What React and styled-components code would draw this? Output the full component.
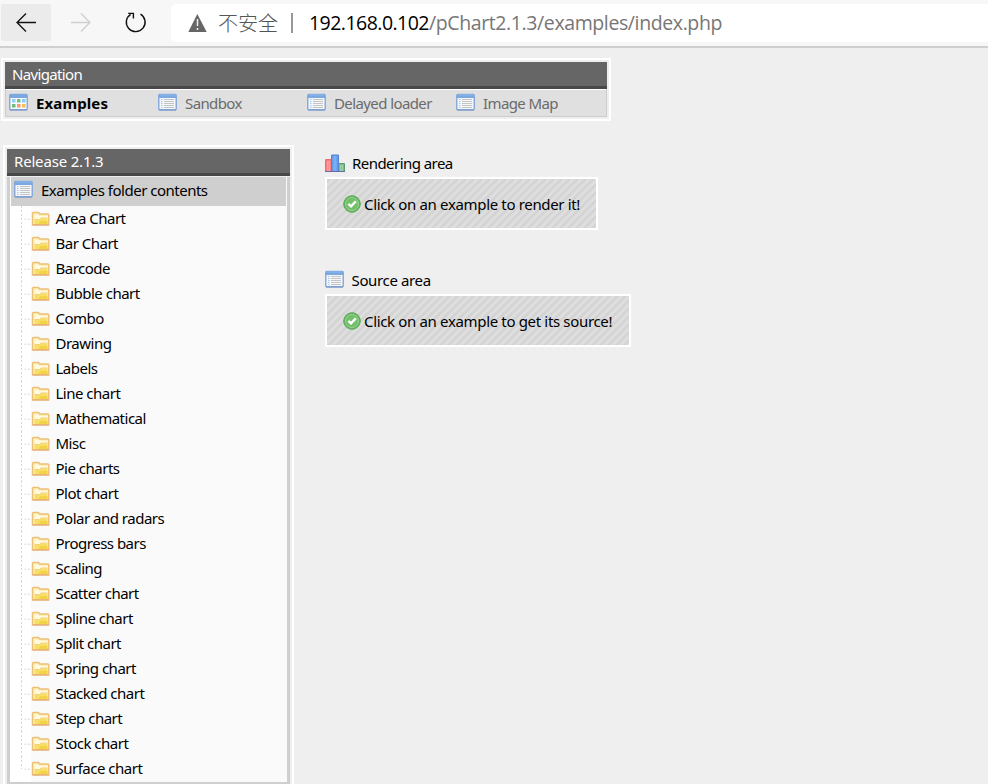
import React from "react";
import styled, { createGlobalStyle } from "styled-components";

const Global = createGlobalStyle`
  * { box-sizing: border-box; }
  html, body { margin: 0; padding: 0; height: 784px; overflow: hidden; background: #efefef; }
  body { font: 15px/20px Tahoma, "Noto Sans", sans-serif; letter-spacing: -0.5px; color: #000; white-space: nowrap; }
  svg { display: block; flex: none; }
`;

const Page = styled.div`
  width: 988px;
  height: 784px;
  overflow: hidden;
  background: #efefef;
`;
const Toolbar = styled.header`
  display: flex;
  height: 48px;
  padding: 4px 0 0 1px;
  background: #f7f7f7;
  border-bottom: 2px solid #cfcfcf;
`;
const ToolButton = styled.div`
  width: ${(p) => p.$w}px;
  height: 37px;
  background: ${(p) => (p.$active ? "#ebebeb" : "transparent")};
  border-radius: 2px;
`;
const Address = styled.div`
  display: flex;
  align-items: center;
  flex: 1;
  height: 38px;
  padding-left: 17px;
  background: #fff;
  border-radius: 5px 0 0 5px;
  font: 19.5px/38px "Segoe UI", "Open Sans", "Noto Sans", sans-serif;
  letter-spacing: ${(p) => p.$spacing}px;
  color: #767676;
`;
const Insecure = styled.span`
  width: 60px;
  margin-left: 11px;
  font: 300 20px/38px "Noto Sans CJK SC", sans-serif;
  letter-spacing: 0;
  color: #555;
`;
const Divider = styled.span`
  width: 2px;
  height: 20px;
  margin: 0 16px 0 13px;
  background: #999;
`;
const Host = styled.span`
  color: #000;
  letter-spacing: -0.53px;
`;
const Frame = styled.section`
  width: ${(p) => p.$w}px;
  height: ${(p) => p.$h}px;
  border: 2px solid #fff;
  padding: 2px;
  flex: none;
`;
const NavFrame = styled(Frame)`
  margin: 10px 0 0 1px;
`;
const Title = styled.div`
  height: 27px;
  padding: 2px 7px 0;
  border-bottom: 3px solid #484848;
  background: #666;
  color: #fff;
  letter-spacing: ${(p) => p.$spacing}px;
`;
const NavBar = styled.nav`
  display: grid;
  grid-template-columns: repeat(4, 149px);
  height: 28px;
  padding: 4px 0 0 3px;
  border: solid #ccc;
  border-width: 0 1px 1px;
  background: #e0e0e0;
  box-shadow: inset 0 1px #fff;
`;
const NavItem = styled.div`
  display: flex;
  height: 20px;
  color: ${(p) => (p.$active ? "#000" : "#6b6b6b")};
  font-weight: ${(p) => (p.$active ? 700 : 400)};
  letter-spacing: ${(p) => (p.$active ? 0.12 : -0.6)}px;
  gap: 8px;
`;
const Content = styled.main`
  display: flex;
  gap: 31px;
  margin: 24px 0 0 3px;
`;
const Tree = styled.div`
  height: 608px;
  border: solid #cfcfcf;
  border-width: 0 3px 3px;
  margin-top: 1px;
  background: linear-gradient(90deg, #fff 21px, #fafafa 21px);
`;
const TreeHead = styled.div`
  display: flex;
  gap: 8px;
  height: 29px;
  margin: 0 1px;
  padding: 3px 0 0 3px;
  background: #cfcfcf;
`;
const TreeRow = styled.div`
  display: flex;
  height: 25px;
  padding-left: 11px;
  line-height: 25px;
`;
const RowLabel = styled.span`
  margin-left: 5.5px;
`;
const Areas = styled.div`
  padding-top: 8px;
`;
const AreaHead = styled.div`
  display: flex;
  gap: ${(p) => p.$gap}px;
  height: 24px;
  line-height: 21px;
  letter-spacing: ${(p) => p.$spacing}px;
`;
const Message = styled.div`
  display: flex;
  align-items: center;
  gap: 3px;
  width: ${(p) => p.$w}px;
  height: 53px;
  margin-bottom: 40px;
  padding: 0 0 0 16px;
  border: 2px solid #fff;
  letter-spacing: -0.34px;
  background: repeating-linear-gradient(135deg, #d4d4d4 0 2.83px, #dedede 2.83px 5.66px);
`;

const ListIcon = () => (
  <svg width="19" height="19" viewBox="0 0 19 19">
    <rect x=".75" y="1.5" width="17.5" height="15.2" rx="1" fill="#f4f7fb" stroke="#8aabd9" strokeWidth="1.5" />
    <path d="M1 1h17v4H1z" fill="#7ba8df" />
    <path d="M2 2h15" stroke="#8db8ec" />
    <path d="M6 6.5h10M6 8.5h10M6 10.5h10M6 12.5h10M6 14.5h10" stroke="#c4c4c4" />
    <path d="M3 6.5h1.5M3 8.5h1.5M3 10.5h1.5M3 12.5h1.5M3 14.5h1.5" stroke="#9dc8f2" />
    <path d="M1 17h17" stroke="#7794c7" />
  </svg>
);
const GridIcon = () => (
  <svg width="19" height="19" viewBox="0 0 19 19">
    <rect x=".75" y="1.5" width="17.5" height="15.2" rx="1" fill="#f8fafb" stroke="#8aabd9" strokeWidth="1.5" />
    <path d="M1 1h17v4H1z" fill="#7ba8df" />
    <path d="M3 6h3.5v3.5H3z" fill="#8fd0f3" />
    <path d="M8 6h3.5v3.5H8z" fill="#74c187" />
    <path d="M13 6h3.5v3.5H13z" fill="#8ccaf8" />
    <path d="M3 11h3.5v3.5H3z" fill="#70bb76" />
    <path d="M8 11h3.5v3.5H8z" fill="#f69b6a" />
    <path d="M13 11h3.5v3.5H13z" fill="#f4bd62" />
    <path d="M1 17h17" stroke="#7794c7" />
  </svg>
);
const FolderIcon = ({ last }) => (
  <svg width="29" height="25" viewBox="0 0 29 25">
    <path d={last ? "M.5 0v13" : "M.5 0v25"} stroke="#d8d8d8" strokeDasharray="2 2" />
    <path d="M3.5 13.2h6" stroke="#d8d8d8" strokeDasharray="2 1.5" />
    <g transform="translate(10.5 5.5)">
      <path d="M1 13.3V2Q1 1 2 1h5l1.3 1.5h8q1 0 1 1V13.3z" fill="#fdf0b9" stroke="#ecbf74" strokeWidth="1.4" />
      <path d="M3 3h3.5l1.2 1.5H16v2H9.5L8 8H3z" fill="#fffae0" />
      <path d="M3 8.5h5L9.5 7H16v5.5H3z" fill="#f7df67" />
      <path d="M9 9.5h7v3H7z" fill="#f2d346" />
      <path d="M3 8h5l1.5-1.5H16" fill="none" stroke="#f3cf80" />
      <path d="M1 13.5h16.5" stroke="#e8ad78" strokeWidth="1.2" />
    </g>
  </svg>
);
const ChartIcon = () => (
  <svg width="20" height="19" viewBox="0 -1 20 19">
    <path d="M.5 5.5h6v12h-6z" fill="#fa7b7d" stroke="#ed6d72" />
    <path d="M2.5 7.5h2v9h-2z" fill="#fb8c8c" stroke="#fba2a2" />
    <path d="M13.5 9.5h6v8h-6z" fill="#79bc80" stroke="#5b9c76" />
    <path d="M15.5 11.5h2v5h-2z" fill="#82c686" stroke="#a0d4a3" />
    <path d="M6.5 1h7v16.5h-7z" fill="#639be9" stroke="#5585d5" />
    <path d="M8.5 2h3v15h-3z" fill="#7baff5" />
    <path d="M0 17.5h20" stroke="#646ba4" />
  </svg>
);
const CheckIcon = () => (
  <svg width="18" height="18" viewBox="0 0 18 18">
    <circle cx="9" cy="9" r="8.3" fill="#66b55e" stroke="#5ba958" />
    <circle cx="9" cy="9" r="6.5" fill="#72c06b" stroke="#9bd392" />
    <path d="M5.4 8.9L8 11.3 12.8 6.3" fill="none" stroke="#fff" strokeWidth="2.4" />
  </svg>
);

const folders = ["Area Chart", "Bar Chart", "Barcode", "Bubble chart", "Combo", "Drawing", "Labels", "Line chart", "Mathematical", "Misc", "Pie charts", "Plot chart", "Polar and radars", "Progress bars", "Scaling", "Scatter chart", "Spline chart", "Split chart", "Spring chart", "Stacked chart", "Step chart", "Stock chart", "Surface chart"];

export default function App() {
  return (
    <Page>
      <Global />
      <Toolbar>
        <ToolButton $w={50} $active>
          <svg width="50" height="37" fill="none" stroke="#111" strokeWidth="1.3">
            <path d="M35 18.5H16M25 9.5l-9 9 9 9" />
          </svg>
        </ToolButton>
        <ToolButton $w={60}>
          <svg width="60" height="37" fill="none" stroke="#cfcfcf" strokeWidth="1.3">
            <path d="M20 18.5h19M30 9.5l9 9-9 9" />
          </svg>
        </ToolButton>
        <ToolButton $w={60}>
          <svg width="60" height="37" fill="none" stroke="#111" strokeWidth="1.4">
            <path d="M29.5 10.1A9.4 9.4 0 1 1 19.6 10.3M17.2 9.4h5.2v5.2" />
          </svg>
        </ToolButton>
        <Address $spacing={-0.39}>
          <svg width="19" height="18" viewBox="0 0 19 18">
            <path d="M9.3 0L18.7 18H.3z" fill="#666" />
            <path d="M9.5 5v7M9.5 14v2" stroke="#eee" strokeWidth="1.5" />
          </svg>
          <Insecure>不安全</Insecure>
          <Divider />
          <Host>192.168.0.102</Host>/pChart2.1.3/examples/index.php
        </Address>
      </Toolbar>
      <NavFrame $w={610} $h={63}>
        <Title $spacing={-0.65}>Navigation</Title>
        <NavBar>
          <NavItem $active><GridIcon />Examples</NavItem>
          <NavItem><ListIcon />Sandbox</NavItem>
          <NavItem><ListIcon />Delayed loader</NavItem>
          <NavItem><ListIcon />Image Map</NavItem>
        </NavBar>
      </NavFrame>
      <Content>
        <Frame $w={291} $h={660}>
          <Title $spacing={-0.18}>Release 2.1.3</Title>
          <Tree>
            <TreeHead><ListIcon />Examples folder contents</TreeHead>
            {folders.map((name, i) => (
              <TreeRow key={name}>
                <FolderIcon last={i === folders.length - 1} />
                <RowLabel>{name}</RowLabel>
              </TreeRow>
            ))}
          </Tree>
        </Frame>
        <Areas>
          <AreaHead $gap={7} $spacing={-0.55}><ChartIcon />Rendering area</AreaHead>
          <Message $w={273}><CheckIcon />Click on an example to render it!</Message>
          <AreaHead $gap={7.5} $spacing={-0.36}><ListIcon />Source area</AreaHead>
          <Message $w={306}><CheckIcon />Click on an example to get its source!</Message>
        </Areas>
      </Content>
    </Page>
  );
}
